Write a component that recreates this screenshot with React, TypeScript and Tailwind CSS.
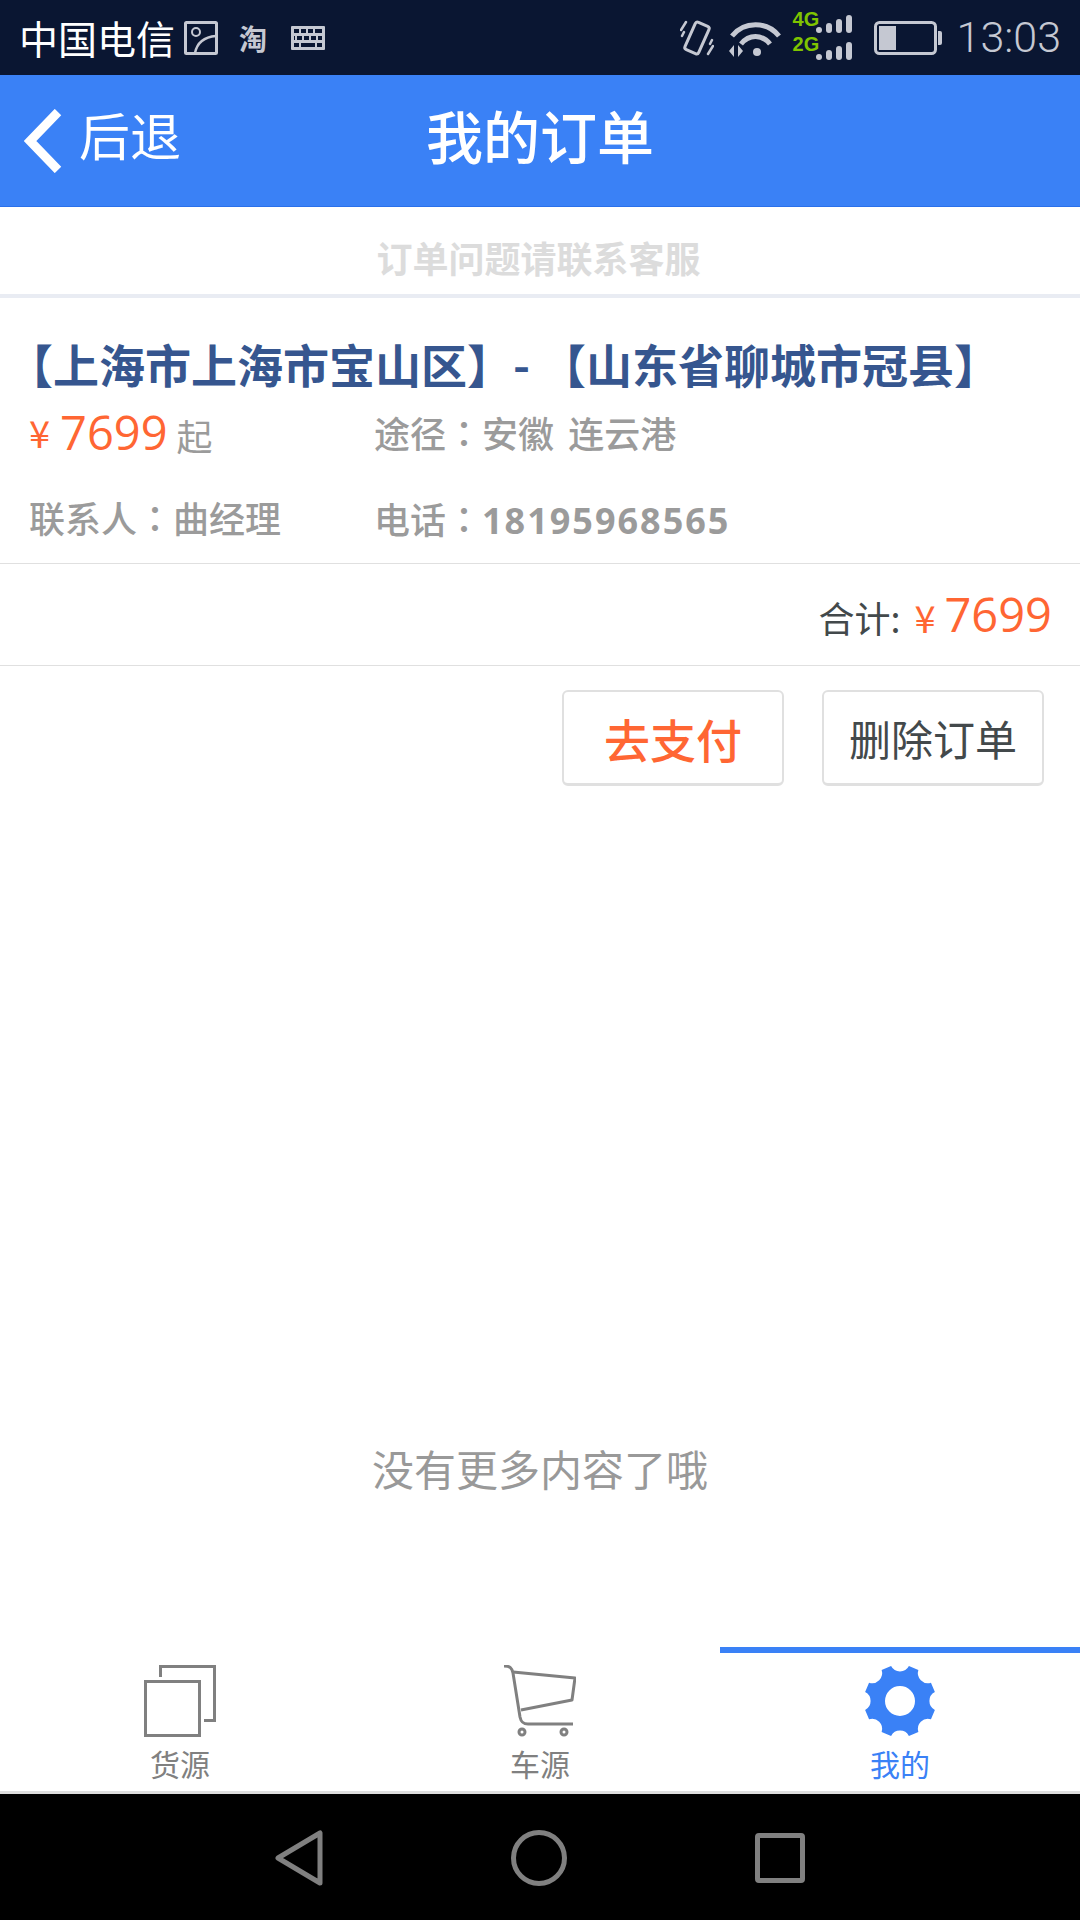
const cjk = "font-['Noto_Sans_CJK_SC','Noto_Sans',sans-serif]";
const cjkTc = "font-['Noto_Sans_CJK_TC','Noto_Sans',sans-serif]";

function gearPath(cx: number, cy: number) {
  // 8 teeth with a round notch between each pair
  const R = 36;
  const gap = 0.25;
  const step = (45 * Math.PI) / 180;
  let d = '';
  for (let i = 0; i < 8; i++) {
    const a = ((i * 45 - 90) * Math.PI) / 180;
    const s = a + gap;
    const e = a + step - gap;
    const n = a + step + gap;
    d += `${i === 0 ? 'M' : 'L'}${(cx + R * Math.cos(s)).toFixed(2)} ${(cy + R * Math.sin(s)).toFixed(2)} `;
    d += `L${(cx + R * Math.cos(e)).toFixed(2)} ${(cy + R * Math.sin(e)).toFixed(2)} `;
    d += `A10 10 0 0 0 ${(cx + R * Math.cos(n)).toFixed(2)} ${(cy + R * Math.sin(n)).toFixed(2)} `;
  }
  return d + 'Z';
}

function SignalBars() {
  return (
    <svg width="36" height="18" viewBox="0 0 36 18" fill="#c5c8d2">
      <circle cx="3" cy="15" r="3" />
      <rect x="10" y="8" width="6" height="10" rx="3" />
      <rect x="20" y="4" width="6" height="14" rx="3" />
      <rect x="30" y="0" width="6" height="18" rx="3" />
    </svg>
  );
}

function Colon() {
  return <span className={cjkTc}>：</span>;
}

function StatusBar() {
  return (
    <div className="h-[75px] bg-[#0a1632] flex items-center pl-[19px] pr-[19px] shrink-0">
      <span className={`${cjk} text-[39px] leading-none text-white`}>中国电信</span>
      {/* picture notification */}
      <svg className="ml-[9px]" width="34" height="34" viewBox="0 0 34 34" fill="none" stroke="#c5c8d2" strokeWidth="3">
        <rect x="1.5" y="1.5" width="31" height="31" rx="1" />
        <circle cx="12" cy="11" r="4" strokeWidth="2" />
        <path d="M11 32C13 22 20 16 32 15" strokeWidth="2.5" />
      </svg>
      <span className={`${cjk} ml-[21px] text-[28px] leading-none font-bold text-[#c5c8d2]`}>淘</span>
      {/* keyboard notification */}
      <svg className="ml-[24px]" width="34" height="24" viewBox="0 0 34 24" fill="#c5c8d2">
        <path
          fillRule="evenodd"
          d="M1 0H33A1 1 0 0 1 34 1V23A1 1 0 0 1 33 24H1A1 1 0 0 1 0 23V1A1 1 0 0 1 1 0ZM3 3V7H8V3ZM10 3V7H15V3ZM17 3V7H22V3ZM24 3V7H31V3ZM6 10V14H11V10ZM13 10V14H18V10ZM20 10V14H25V10ZM27 10V14H31V10ZM3 10V14H4V10ZM3 17V21H8V17ZM10 17V21H24V17ZM26 17V21H31V17Z"
        />
      </svg>

      <div className="ml-auto flex items-center">
        {/* vibrate */}
        <svg width="34" height="38" viewBox="0 0 34 38" fill="none" stroke="#c5c8d2" strokeWidth="2.5" strokeLinecap="round">
          <rect x="-7.5" y="-15" width="15" height="30" rx="2.5" transform="translate(17 19) rotate(24)" strokeWidth="3" />
          <path d="M1 11L6 3M2 17L4 13M33 27L28 35M32 21L30 25" />
        </svg>
        {/* wifi */}
        <svg className="ml-[15px]" width="53" height="38" viewBox="0 0 53 38" fill="none" stroke="#c5c8d2" strokeWidth="5">
          <path d="M3 17C15 2 38 2 50 17" />
          <path d="M12 25C20 15 33 15 41 25" />
          <circle cx="28" cy="33" r="4" fill="#c5c8d2" stroke="none" />
          <path d="M0 32L5 26V38ZM9 26L14 32L9 38Z" fill="#c5c8d2" stroke="none" />
        </svg>
        {/* dual sim signal */}
        <div className="ml-[11px] w-[59px] flex flex-col gap-[9px] relative">
          <div className="h-[18px] flex justify-end items-end">
            <SignalBars />
            <span className="absolute left-0 top-[-6px] font-['Liberation_Sans',sans-serif] text-[20px] leading-none font-bold text-[#7fc400]">4G</span>
          </div>
          <div className="h-[18px] flex justify-end items-end">
            <SignalBars />
            <span className="absolute left-0 top-[19px] font-['Liberation_Sans',sans-serif] text-[20px] leading-none font-bold text-[#7fc400]">2G</span>
          </div>
        </div>
        {/* battery */}
        <svg className="ml-[22px]" width="68" height="34" viewBox="0 0 68 34" fill="none">
          <rect x="1.5" y="1.5" width="60" height="31" rx="4" stroke="#c5c8d2" strokeWidth="3" />
          <rect x="5" y="5" width="17" height="24" fill="#c5c8d2" />
          <path d="M64 10H66A2 2 0 0 1 68 12V22A2 2 0 0 1 66 24H64Z" fill="#c5c8d2" />
        </svg>
        <span className="ml-[15px] font-['Roboto',sans-serif] font-light text-[43px] leading-none text-[#c5c8d2]">13:03</span>
      </div>
    </div>
  );
}

function Header() {
  return (
    <div className="h-[132px] bg-[#3a81f6] border-b border-[#2a70ea] relative flex items-center justify-center pb-[12px] shrink-0">
      <div className="absolute left-[24px] top-0 h-full flex items-center">
        <svg width="38" height="64" viewBox="0 0 38 64" fill="none" stroke="white" strokeWidth="9">
          <path d="M34 3L6 32L34 61" />
        </svg>
        <span className={`${cjk} ml-[17px] mb-[12px] text-[51px] leading-none text-white`}>后退</span>
      </div>
      <h1 className={`${cjk} text-[57px] leading-none font-medium text-white`}>我的订单</h1>
    </div>
  );
}

function Yuan() {
  return <span className={`${cjk} text-[38px] leading-none text-[#ff6633]`}>¥</span>;
}

function OrderCard() {
  const label = `${cjk} text-[36px] leading-none font-medium text-[#9b9b9b] whitespace-nowrap`;
  return (
    <div>
      <div className={`pl-[7px] pt-[40px] ${cjk} text-[46px] leading-[50px] h-[104px] font-bold text-[#36568f] whitespace-nowrap`}>
        【上海市上海市宝山区】<span className="inline-block w-[27px]">-</span>【山东省聊城市冠县】
      </div>
      <div className="h-[60px] flex items-center pl-[29px]">
        <div className="w-[345px] flex items-center shrink-0">
          <Yuan />
          <span className="ml-[10px] font-['Open_Sans',sans-serif] text-[47px] leading-none text-[#ff6633]">7699</span>
          <span className={`${cjk} ml-[9px] text-[36px] leading-none text-[#9b9b9b] mt-[6px]`}>起</span>
        </div>
        <span className={`${label} [word-spacing:6px]`}>
          途径<Colon />安徽 连云港
        </span>
      </div>
      <div className="h-[50px] mt-[32px] flex items-center pl-[29px]">
        <div className="w-[345px] shrink-0">
          <span className={label}>
            联系人<Colon />曲经理
          </span>
        </div>
        <span className={label}>
          电话<Colon />
          <span className="font-['Open_Sans',sans-serif] font-bold tracking-[2px]">18195968565</span>
        </span>
      </div>
      <div className="mt-[19px] h-[103px] border-y border-[#e0e0e0] flex items-center justify-end pr-[28px]">
        <span className={`${cjk} text-[36px] leading-none text-[#43494b] mt-[4px]`}>合计:</span>
        <span className="ml-[14px] mt-[4px] flex items-center">
          <Yuan />
        </span>
        <span className="ml-[9px] font-['Open_Sans',sans-serif] text-[47px] leading-none text-[#ff6633]">7699</span>
      </div>
      <div className="flex justify-end gap-[38px] pr-[36px] pt-[24px]">
        <button className={`w-[222px] h-[96px] rounded-[6px] border-2 border-[#e0e0e0] border-b-[3px] bg-white ${cjk} text-[46px] leading-none font-medium text-[#ff6633]`}>
          去支付
        </button>
        <button className={`w-[222px] h-[96px] rounded-[6px] border-2 border-[#e0e0e0] border-b-[3px] bg-white ${cjk} text-[42px] leading-none text-[#43494b]`}>
          删除订单
        </button>
      </div>
    </div>
  );
}

function TabBar() {
  return (
    <div className="h-[147px] grid grid-cols-3 border-b-[3px] border-[#dedede] shrink-0">
      <div className="flex flex-col items-center pt-[18px]">
        <svg width="72" height="72" viewBox="0 0 72 72" fill="none" stroke="#808080" strokeWidth="3">
          <rect x="1.5" y="16.5" width="54" height="54" />
          <path d="M16.5 12V1.5H70.5V55.5H60" />
        </svg>
        <span className={`${cjk} mt-[11px] text-[30px] leading-none text-[#808080]`}>货源</span>
      </div>
      <div className="flex flex-col items-center pt-[18px]">
        <svg width="72" height="72" viewBox="0 0 72 72" fill="none" stroke="#808080" strokeWidth="3">
          <path d="M0 1C6 1 8 3 9 8L16 52C17 57 19 59 24 59H69" />
          <path d="M9 7L71 13L68 35L17 45" strokeLinejoin="round" />
          <circle cx="18" cy="67" r="3" />
          <circle cx="60" cy="67" r="3" />
        </svg>
        <span className={`${cjk} mt-[11px] text-[30px] leading-none text-[#808080]`}>车源</span>
      </div>
      <div className="flex flex-col items-center pt-[12px] border-t-[6px] border-[#3a81f6]">
        <svg width="74" height="72" viewBox="0 0 74 72" fill="#3a81f6">
          <path fillRule="evenodd" d={`${gearPath(37, 36)} M37 21A15 15 0 1 0 37 51A15 15 0 1 0 37 21Z`} />
        </svg>
        <span className={`${cjk} mt-[11px] text-[30px] leading-none text-[#3a81f6]`}>我的</span>
      </div>
    </div>
  );
}

function NavBar() {
  return (
    <div className="h-[126px] bg-black flex items-center justify-center gap-[188px] pt-[1px] shrink-0">
      <svg width="48" height="56" viewBox="0 0 48 56" fill="none" stroke="#808080" strokeWidth="5" strokeLinejoin="round">
        <path d="M45 3V53L3 28Z" />
      </svg>
      <svg width="56" height="56" viewBox="0 0 56 56" fill="none" stroke="#808080" strokeWidth="5">
        <circle cx="28" cy="28" r="25.5" />
      </svg>
      <div className="w-[50px] h-[50px] rounded-[4px] border-[5px] border-[#808080]" />
    </div>
  );
}

export default function App() {
  return (
    <div className="w-[1080px] h-[1920px] bg-white flex flex-col overflow-hidden">
      <StatusBar />
      <Header />
      <div className={`h-[91px] border-b-4 border-[#e9ecf3] pt-[12px] pr-[3px] flex items-center justify-center ${cjk} text-[36px] leading-none font-bold text-[#dcdcdc] shrink-0`}>
        订单问题请联系客服
      </div>
      <OrderCard />
      <div className="flex-1 flex items-end justify-center pb-[158px]">
        <span className={`${cjk} text-[42px] leading-none text-[#999999]`}>没有更多内容了哦</span>
      </div>
      <TabBar />
      <NavBar />
    </div>
  );
}
